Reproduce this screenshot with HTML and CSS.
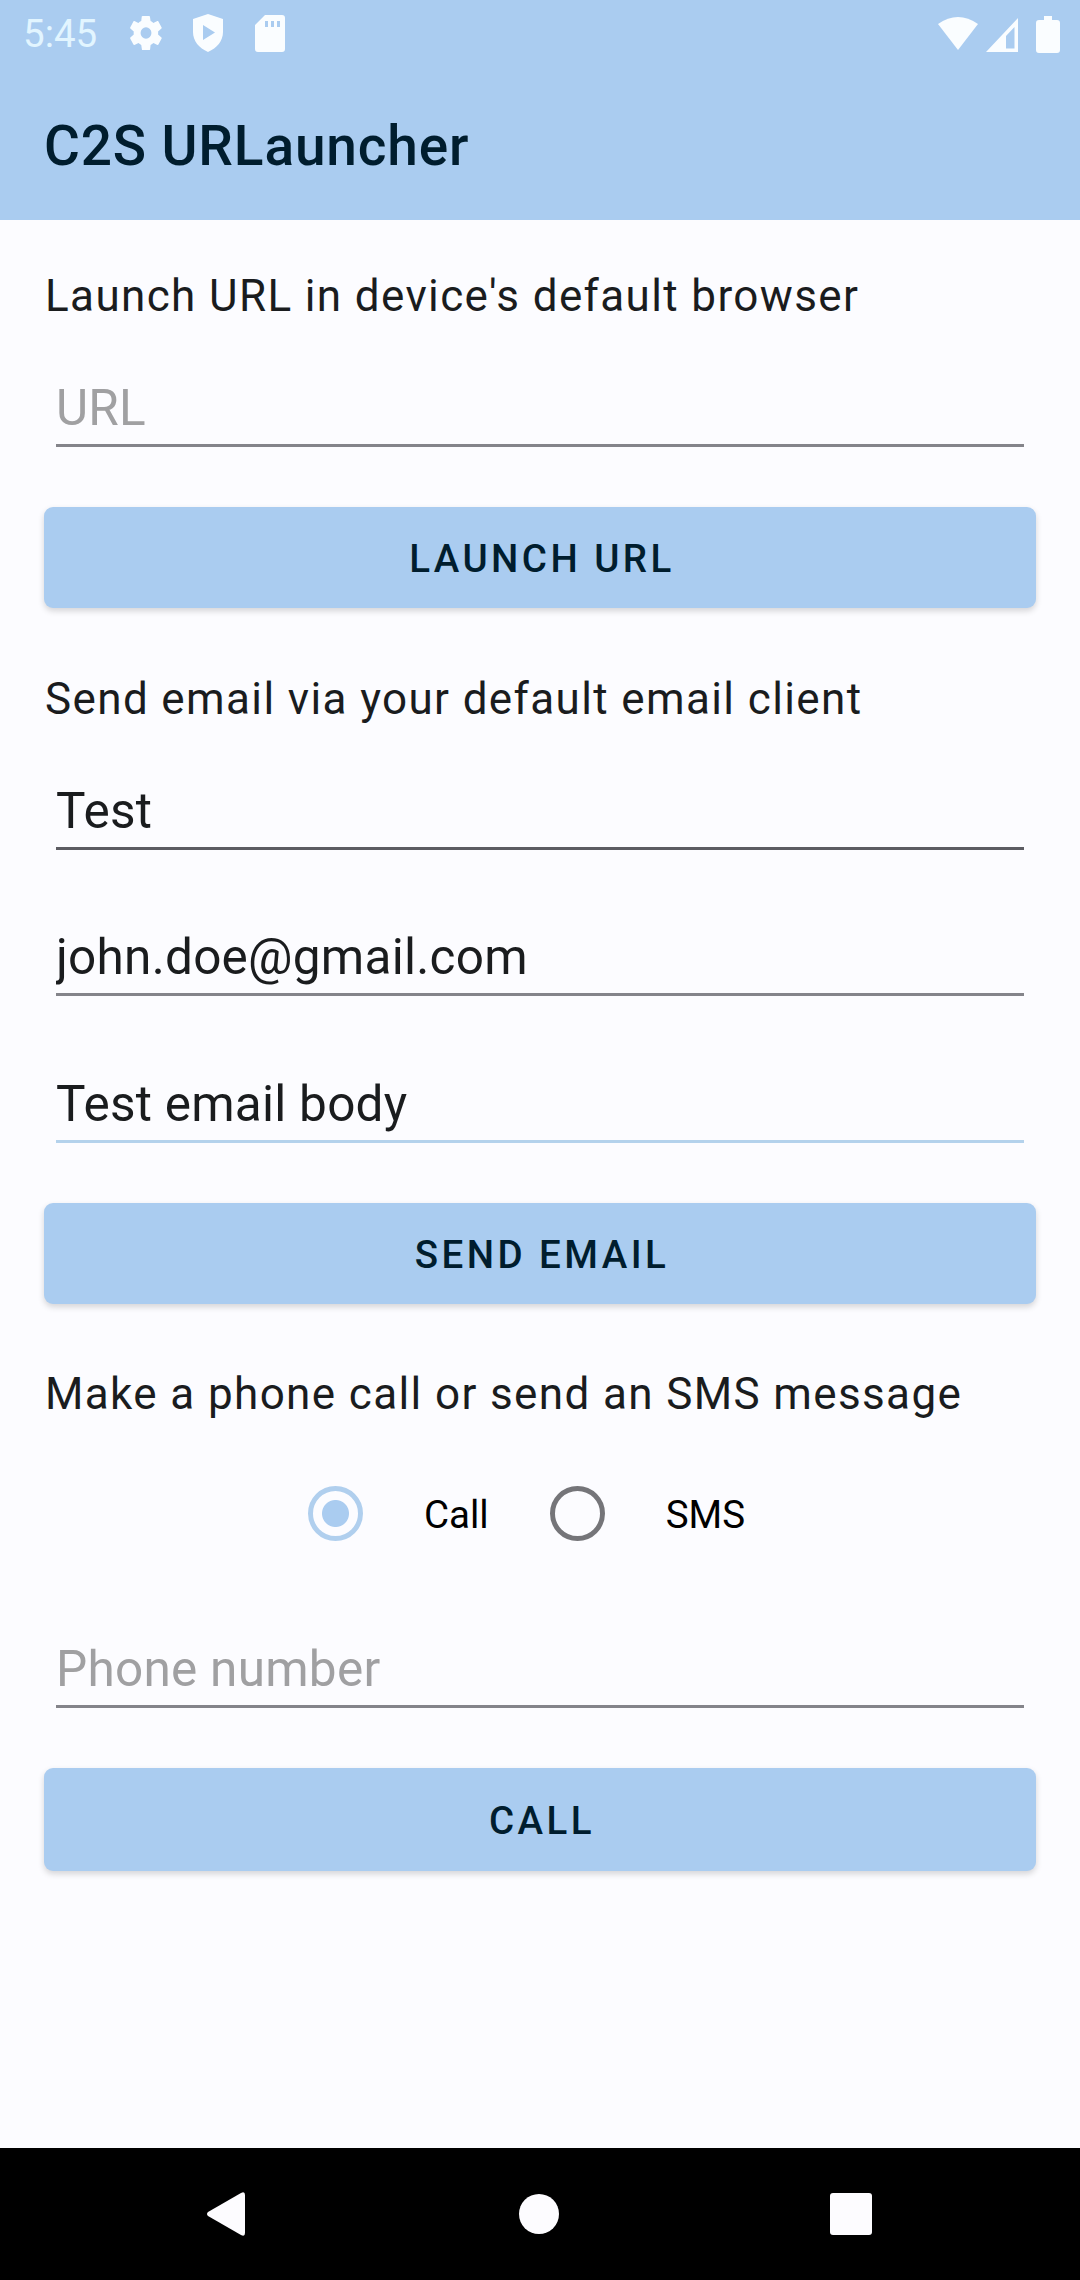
FILE: index.html
```html
<!DOCTYPE html>
<html lang="en">
<head>
<meta charset="utf-8">
<title>C2S URLauncher</title>
<link rel="stylesheet" href="styles.css">
</head>
<body>
<header class="top">
  <div class="status">
    <div class="status-left">
      <span class="time">5:45</span>
      <svg class="gear" width="34" height="36" viewBox="2 2 20 20" preserveAspectRatio="none"><path d="M19.1 12.9a7 7 0 0 0 0-1.8l2-1.6c.2-.1.2-.4.1-.6l-1.9-3.3c-.1-.2-.4-.3-.6-.2l-2.4 1a7 7 0 0 0-1.6-1l-.4-2.5c0-.2-.2-.4-.5-.4h-3.800c-.2 0-.4.2-.5.4l-.3 2.500a7 7 0 0 0-1.700 1l-2.300-1c-.2-.1-.5 0-.6.2L2.700 8.900c-.1.2-.1.5.1.6l2 1.600a7 7 0 0 0 0 1.800l-2 1.600c-.2.1-.2.4-.1.6l1.900 3.300c.1.2.4.3.6.2l2.400-1a7 7 0 0 0 1.600 1l.4 2.500c0 .2.2.4.5.4h3.800c.2 0 .4-.2.5-.4l.3-2.500a7 7 0 0 0 1.700-1l2.300 1c.2.1.5 0 .6-.2l1.900-3.300c.1-.2.1-.5-.1-.6zM12 15.200a3.200 3.200 0 1 1 0-6.400 3.200 3.200 0 0 1 0 6.400z"/></svg>
      <svg class="shield" width="32" height="38" viewBox="0 0 32 38"><path fill-rule="evenodd" d="M16 0 31 5V18C31 27 25 34 16 38 7 34 1 27 1 18V5ZM11 11V26L23 18.500Z"/></svg>
      <svg class="card" width="30" height="37" viewBox="0 0 30 37"><path fill-rule="evenodd" d="M10 0H27Q30 0 30 3V34Q30 37 27 37H3Q0 37 0 34V10ZM10 6V12H13V6ZM16 6V12H19V6ZM22 6V12H25V6Z"/></svg>
    </div>
    <div class="status-right">
      <svg width="40" height="33" viewBox="0 0 40 33"><path d="M0 7Q20-7 40 7L20 33Z"/></svg>
      <svg class="signal" width="32" height="34" viewBox="0 0 32 34"><path fill-rule="evenodd" d="M32 0V34H0ZM28.500 9 20 18V30.500H28.500Z"/></svg>
      <svg class="battery" width="24" height="37" viewBox="0 0 24 37"><path d="M8 0H16V4H21Q24 4 24 7V34Q24 37 21 37H3Q0 37 0 34V7Q0 4 3 4H8Z"/></svg>
    </div>
  </div>
  <h1 class="title">C2S URLauncher</h1>
</header>

<main class="content">
  <section class="group">
    <h2 class="label">Launch URL in device's default browser</h2>
    <input class="field" type="text" placeholder="URL">
    <button class="button">LAUNCH URL</button>
  </section>
  <section class="group email">
    <h2 class="label">Send email via your default email client</h2>
    <div class="fields">
      <input class="field filled" type="text" value="Test">
      <input class="field" type="text" value="john.doe@gmail.com">
      <input class="field active" type="text" value="Test email body">
    </div>
    <button class="button">SEND EMAIL</button>
  </section>
  <section class="group">
    <h2 class="label">Make a phone call or send an SMS message</h2>
    <div class="options">
      <label class="option"><span class="radio checked"></span><span class="option-text">Call</span></label>
      <label class="option"><span class="radio"></span><span class="option-text">SMS</span></label>
    </div>
    <input class="field phone" type="text" placeholder="Phone number">
    <button class="button call">CALL</button>
  </section>
</main>

<nav class="nav">
  <svg width="40" height="46" viewBox="0 0 40 46"><path d="M35 2Q39 0 39 4V42Q39 46 35 44L2 25Q0 23 2 21Z"/></svg>
  <svg width="42" height="42" viewBox="0 0 42 42"><circle cx="22" cy="21" r="20"/></svg>
  <svg width="42" height="42" viewBox="0 0 42 42"><rect width="42" height="42" rx="3"/></svg>
</nav>
</body>
</html>
```
FILE: styles.css
```css
* { box-sizing: border-box; }

body {
  margin: 0;
  width: 1080px;
  height: 2280px;
  display: flex;
  flex-direction: column;
  background: #fcfcff;
  color: #1a1c1e;
  font-family: Roboto, "Liberation Sans", sans-serif;
  overflow: hidden;
}

.top { height: 220px; background: #aaccf0; }

.status {
  height: 66px;
  padding: 0 20px 0 23px;
  display: flex;
  justify-content: space-between;
  align-items: center;
}

.status svg { display: block; fill: #fafdff; }
.status-left, .status-right { display: flex; align-items: center; }
.time { width: 74px; font-size: 38.5px; line-height: 66px; color: #e2f5ff; padding-top: 2px; }
.gear { margin-left: 32px; }
.shield { margin-left: 29px; }
.card { margin-left: 31px; }
.signal { margin: 4px 18px 0 8px; }
.battery { margin-top: 2px; }

.title {
  margin: 0;
  padding: 47px 0 0 44px;
  font-size: 55px;
  font-weight: 500;
  line-height: 66px;
  letter-spacing: 0.85px;
  color: #001d2e;
}

.content { flex: 1; padding: 46px 44px 0; }
.group { display: flex; flex-direction: column; margin-bottom: 61px; }
.group.email { margin-bottom: 60px; }

.label {
  margin: 0 0 52px;
  padding-left: 1px;
  font-size: 44px;
  font-weight: 400;
  line-height: 60px;
  letter-spacing: 1.375px;
  white-space: nowrap;
}

.field {
  height: 69px;
  margin: 0 12px 60px;
  padding: 0 0 6px;
  border: 0;
  border-bottom: 3px solid #84848a;
  border-radius: 0;
  background: transparent;
  color: #1a1c1e;
  font: 400 49.5px/60px Roboto, "Liberation Sans", sans-serif;
  letter-spacing: 0.25px;
  outline: 0;
}

.field::placeholder { color: #a0a0a2; opacity: 1; }
.fields { display: flex; flex-direction: column; gap: 77px; margin-bottom: 60px; }
.fields .field { margin-bottom: 0; }
.field.filled { border-color: #5c5c62; }
.field.active { margin-top: 1px; border-color: #b4d2ec; }

.button {
  height: 101px;
  padding: 2px 0 0 4px;
  border: 0;
  border-radius: 9px;
  background: #aaccf0;
  color: #001d2e;
  font: 500 38.5px/99px Roboto, "Liberation Sans", sans-serif;
  letter-spacing: 3.44px;
  box-shadow: 0 3px 6px rgba(0, 0, 0, 0.16);
}

.button.call { height: 103px; }

.options {
  display: flex;
  height: 60px;
  gap: 61px;
  margin: 7px 0 96px 264px;
}

.option { display: flex; align-items: center; gap: 61px; }

.radio {
  width: 55px;
  height: 55px;
  border: 5px solid #757579;
  border-radius: 50%;
}

.radio.checked {
  border-color: #b0cfee;
  background: radial-gradient(circle, #aaccf0 13px, transparent 14px);
}

.option-text { padding-top: 3px; font-size: 38.5px; line-height: 57px; color: #000; }

.nav {
  height: 132px;
  padding: 0 208px 0 206px;
  display: flex;
  align-items: center;
  justify-content: space-between;
  background: #000;
}

.nav svg { display: block; fill: #fdfcff; }
```
